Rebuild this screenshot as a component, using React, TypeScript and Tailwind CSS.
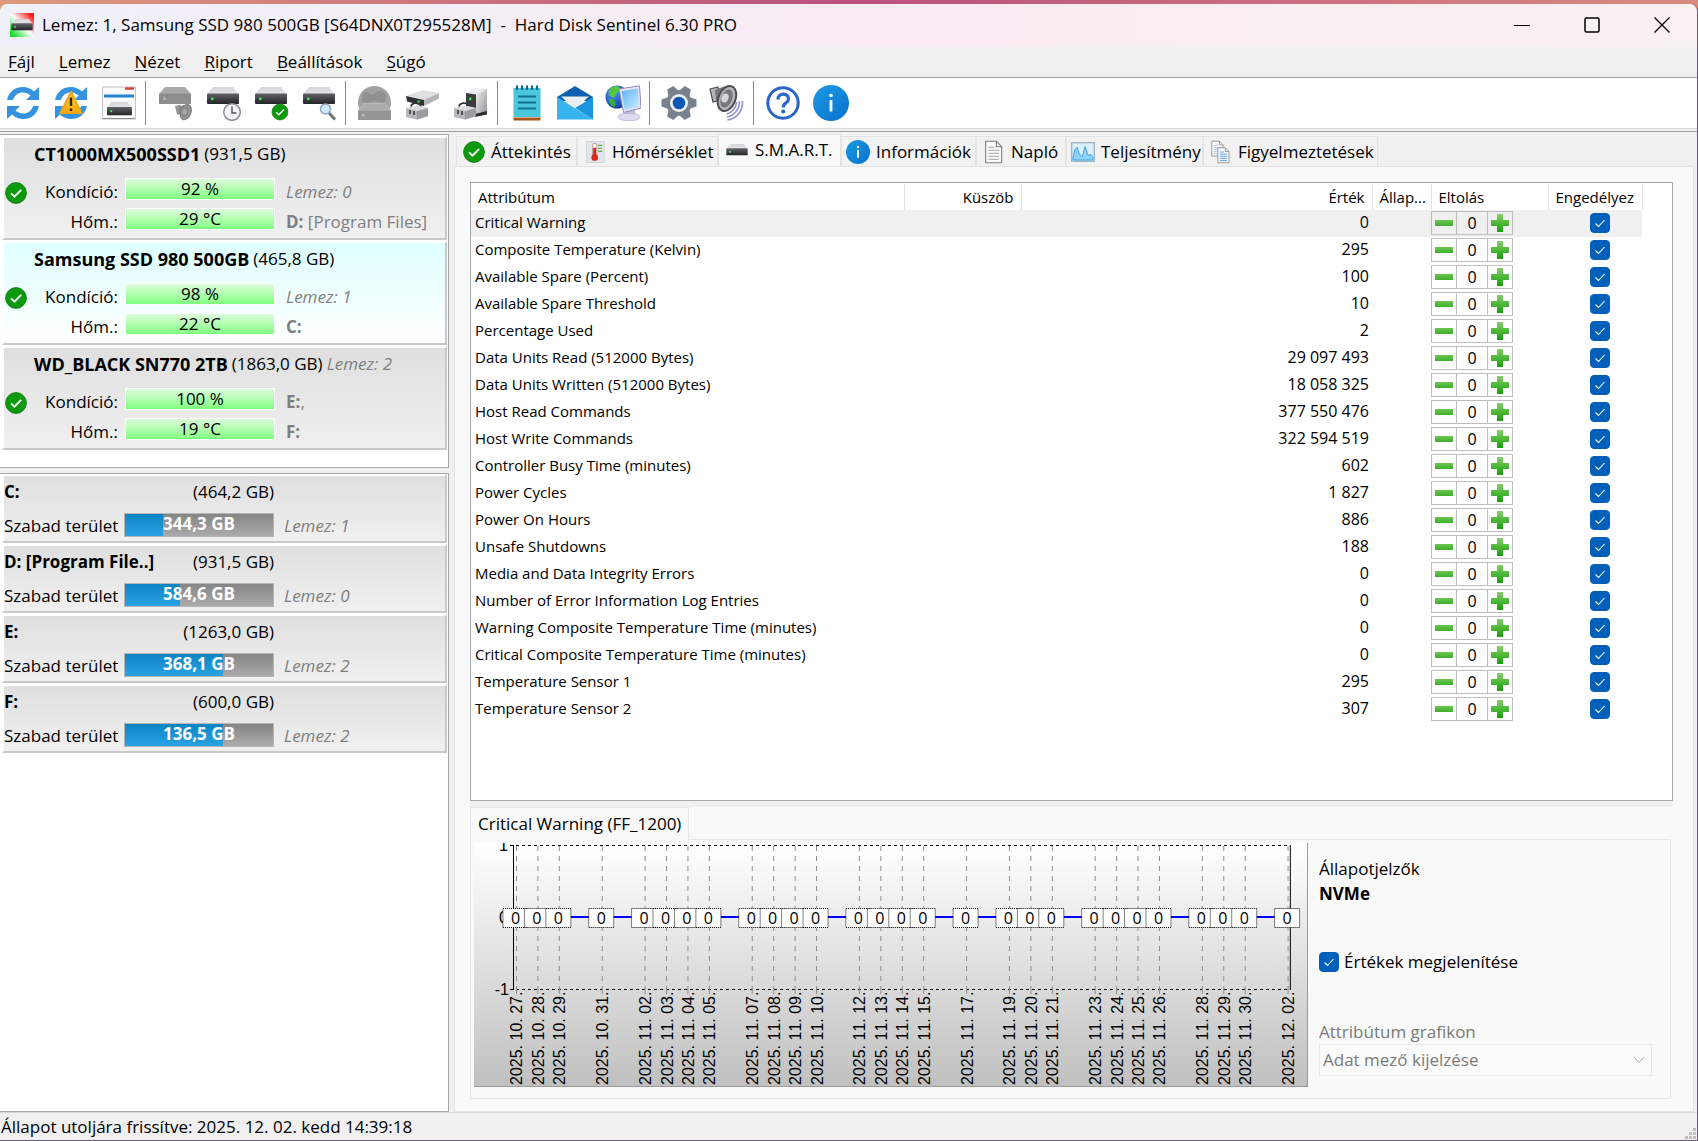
import { useId, useState } from 'react';
import type { ReactNode } from 'react';

type Disk = {
  name: string;
  size: string;
  index?: string;
  health: string;
  temp: string;
  notes: ReactNode[];
};

const disks: Disk[] = [
  {
    name: 'CT1000MX500SSD1',
    size: '(931,5 GB)',
    health: '92 %',
    temp: '29 °C',
    notes: [<i>Lemez: 0</i>, <><b>D:</b> [Program Files]</>],
  },
  {
    name: 'Samsung SSD 980 500GB',
    size: '(465,8 GB)',
    health: '98 %',
    temp: '22 °C',
    notes: [<i>Lemez: 1</i>, <b>C:</b>],
  },
  {
    name: 'WD_BLACK SN770 2TB',
    size: '(1863,0 GB)',
    index: 'Lemez: 2',
    health: '100 %',
    temp: '19 °C',
    notes: [<><b>E:</b>,</>, <b>F:</b>],
  },
];

const volumes = [
  { name: 'C:', size: '(464,2 GB)', free: '344,3 GB', used: 26, disk: 'Lemez: 1' },
  { name: 'D: [Program File..]', size: '(931,5 GB)', free: '584,6 GB', used: 37, disk: 'Lemez: 0' },
  { name: 'E:', size: '(1263,0 GB)', free: '368,1 GB', used: 66, disk: 'Lemez: 2' },
  { name: 'F:', size: '(600,0 GB)', free: '136,5 GB', used: 66, disk: 'Lemez: 2' },
];

const attributes: [string, string][] = [
  ['Critical Warning', '0'],
  ['Composite Temperature (Kelvin)', '295'],
  ['Available Spare (Percent)', '100'],
  ['Available Spare Threshold', '10'],
  ['Percentage Used', '2'],
  ['Data Units Read (512000 Bytes)', '29 097 493'],
  ['Data Units Written (512000 Bytes)', '18 058 325'],
  ['Host Read Commands', '377 550 476'],
  ['Host Write Commands', '322 594 519'],
  ['Controller Busy Time (minutes)', '602'],
  ['Power Cycles', '1 827'],
  ['Power On Hours', '886'],
  ['Unsafe Shutdowns', '188'],
  ['Media and Data Integrity Errors', '0'],
  ['Number of Error Information Log Entries', '0'],
  ['Warning Composite Temperature Time (minutes)', '0'],
  ['Critical Composite Temperature Time (minutes)', '0'],
  ['Temperature Sensor 1', '295'],
  ['Temperature Sensor 2', '307'],
];

// day = days since the first sample
const samples = [
  { day: 0, date: '2025. 10. 27.' },
  { day: 1, date: '2025. 10. 28.' },
  { day: 2, date: '2025. 10. 29.' },
  { day: 4, date: '2025. 10. 31.' },
  { day: 6, date: '2025. 11. 02.' },
  { day: 7, date: '2025. 11. 03.' },
  { day: 8, date: '2025. 11. 04.' },
  { day: 9, date: '2025. 11. 05.' },
  { day: 11, date: '2025. 11. 07.' },
  { day: 12, date: '2025. 11. 08.' },
  { day: 13, date: '2025. 11. 09.' },
  { day: 14, date: '2025. 11. 10.' },
  { day: 16, date: '2025. 11. 12.' },
  { day: 17, date: '2025. 11. 13.' },
  { day: 18, date: '2025. 11. 14.' },
  { day: 19, date: '2025. 11. 15.' },
  { day: 21, date: '2025. 11. 17.' },
  { day: 23, date: '2025. 11. 19.' },
  { day: 24, date: '2025. 11. 20.' },
  { day: 25, date: '2025. 11. 21.' },
  { day: 27, date: '2025. 11. 23.' },
  { day: 28, date: '2025. 11. 24.' },
  { day: 29, date: '2025. 11. 25.' },
  { day: 30, date: '2025. 11. 26.' },
  { day: 32, date: '2025. 11. 28.' },
  { day: 33, date: '2025. 11. 29.' },
  { day: 34, date: '2025. 11. 30.' },
  { day: 36, date: '2025. 12. 02.' },
];

/* ---------- icons ---------- */

function Svg({ size = 36, children }: { size?: number; children: ReactNode }) {
  return (
    <svg width={size} height={size} viewBox="0 0 36 36" aria-hidden="true" className="shrink-0">
      {children}
    </svg>
  );
}

function IconDefs() {
  return (
    <svg width="0" height="0" className="absolute" aria-hidden="true">
      <defs>
        <linearGradient id="diskTop" x1="0" y1="0" x2="0" y2="1">
          <stop offset="0" stopColor="#d3d4d6" />
          <stop offset="1" stopColor="#e6e7e9" />
        </linearGradient>
        <linearGradient id="diskBody" x1="0" y1="0" x2="0" y2="1">
          <stop offset="0" stopColor="#626366" />
          <stop offset="1" stopColor="#232427" />
        </linearGradient>
        <linearGradient id="metal" x1="0" y1="0" x2="1" y2="1">
          <stop offset="0" stopColor="#f1f1f2" />
          <stop offset="1" stopColor="#8f9094" />
        </linearGradient>
        <linearGradient id="sky" x1="0" y1="0" x2="1" y2="1">
          <stop offset="0" stopColor="#1c9ae2" />
          <stop offset="1" stopColor="#0872cf" />
        </linearGradient>
        <linearGradient id="screen" x1="0" y1="0" x2="1" y2="1">
          <stop offset="0" stopColor="#5fb0f0" />
          <stop offset="1" stopColor="#c6efff" />
        </linearGradient>
        <linearGradient id="warn" x1="0" y1="0" x2="0" y2="1">
          <stop offset="0" stopColor="#ffd83a" />
          <stop offset="1" stopColor="#f3a50c" />
        </linearGradient>
        <linearGradient id="leaf" x1="0" y1="0" x2="0" y2="1">
          <stop offset="0" stopColor="#86cf6c" />
          <stop offset="1" stopColor="#16a008" />
        </linearGradient>
        <linearGradient id="leafBar" x1="0" y1="0" x2="0" y2="1">
          <stop offset="0" stopColor="#6cc653" />
          <stop offset="1" stopColor="#3cb02a" />
        </linearGradient>
        <linearGradient id="chartBg" x1="0" y1="0" x2="0" y2="1">
          <stop offset="0" stopColor="#ffffff" />
          <stop offset="1" stopColor="#c0c0c0" />
        </linearGradient>
        <radialGradient id="globe" cx=".35" cy=".3" r=".8">
          <stop offset="0" stopColor="#4f9cf5" />
          <stop offset="1" stopColor="#0a2f9c" />
        </radialGradient>
        <linearGradient id="appIcon" x1="1" y1="0" x2="0" y2="1">
          <stop offset="0.1" stopColor="#ff1a1a" />
          <stop offset="0.5" stopColor="#ffffff" />
          <stop offset="0.9" stopColor="#19dc28" />
        </linearGradient>
      </defs>
    </svg>
  );
}

// 32 x 17 drive seen from the front
function Drive({ at = '2 2', scale = 1, off = false }: { at?: string; scale?: number; off?: boolean }) {
  return (
    <g transform={`translate(${at}) scale(${scale})`}>
      <path d="M6 0H26L32 7H0Z" fill={off ? '#a9a9a9' : 'url(#diskTop)'} />
      <rect y="6.5" width="32" height="10.5" rx="1" fill={off ? '#8d8d8d' : 'url(#diskBody)'} />
      <rect x="4" y="10.5" width="2.6" height="2.6" fill={off ? '#b9b9b9' : '#2cf03c'} />
    </g>
  );
}

function CheckBadge() {
  return (
    <>
      <circle cx="18" cy="18" r="17" fill="#0b9a0b" stroke="#117a14" strokeWidth="1.5" />
      <path d="M10 18.5L15.5 24L26.5 13" fill="none" stroke="#fff" strokeWidth="3" />
    </>
  );
}

function InfoDisc() {
  return (
    <>
      <circle cx="18" cy="18" r="18" fill="url(#sky)" />
      <circle cx="18" cy="10.5" r="1.8" fill="#fff" />
      <path d="M18 15V26.5" stroke="#fff" strokeWidth="2.8" />
    </>
  );
}

const ARROW = 'M2 15C4 6 11 1.500 19 2C23 2.300 26.500 4 29 6.500L34 2V15H21L25.500 10.500C20 5.500 10.500 6.500 8 15Z';

function RefreshArrows() {
  return (
    <g fill="#3593e0">
      <path d={ARROW} />
      <path d={ARROW} transform="rotate(180 18 18)" />
    </g>
  );
}

function Speaker({ off = false }: { off?: boolean }) {
  const dark = off ? '#7d7d7d' : '#4b4c50';
  const mid = off ? '#9a9a9a' : '#b4b5b9';
  const core = off ? '#8a8a8a' : '#77787d';
  return (
    <>
      <path d="M1 4L9 2L12 15L4 17Z" fill={mid} stroke={dark} strokeWidth="1.2" />
      <path d="M6 5L16 1L12 24L7 16Z" fill={core} />
      <ellipse cx="18" cy="13.500" rx="8.500" ry="13" fill={mid} stroke={dark} strokeWidth="2" transform="rotate(22 18 13.500)" />
      <ellipse cx="17.500" cy="13.500" rx="5.500" ry="9.500" fill={core} transform="rotate(22 17.500 13.500)" />
      <ellipse cx="16" cy="13" rx="3.500" ry="4.500" fill={off ? '#a8a8a8' : '#d4d5d8'} transform="rotate(22 16 13)" />
      {!off && (
        <g fill="none" stroke="#9391cf" strokeWidth="1.6">
          <path d="M27.500 17C27 23 23 27.500 17.500 29" />
          <path d="M30.500 16C30.500 24 25.500 30.500 18 32" />
          <path d="M33.500 16C34 26 28 33.500 18.500 35" />
        </g>
      )}
    </>
  );
}

function Toolbox() {
  return (
    <>
      <path d="M6 21.500C7 17 15 17 16 21.500" fill="none" stroke="#333" strokeWidth="1.8" />
      <path d="M1 23L14 21L23 23V31L12 34.500L1 32Z" fill="#b6b7ba" />
      <path d="M12 26L23 23V31L12 34.500Z" fill="#9b9ca0" />
      <path d="M1 23L14 21L23 23L12 26Z" fill="#dcdcde" />
      <path d="M5 25V29M9 26V30" stroke="#4a4a4d" strokeWidth="1.8" />
    </>
  );
}

function Gear() {
  return (
    <>
      {[30, 90, 150, 210, 270, 330].map((a) => (
        <path key={a} d="M14.500 .500H21.500L24 8H12Z" fill="#78828c" transform={`rotate(${a} 18 18)`} />
      ))}
      <circle cx="18" cy="18" r="12.800" fill="#78828c" />
      <circle cx="18" cy="18" r="9" fill="#eef1f4" />
      <circle cx="18" cy="18" r="6.300" fill="#0b57b4" />
    </>
  );
}

function Sheet({ x = 0, y = 0, line = '#b5b5b5' }: { x?: number; y?: number; line?: string }) {
  return (
    <g transform={`translate(${x} ${y})`}>
      <path d="M1 1H17L25 9V33H1Z" fill="#fcfcfc" stroke="#7b7b7b" strokeWidth="1.600" />
      <path d="M17 1V9H25" fill="none" stroke="#7b7b7b" strokeWidth="1.600" />
      <path d="M5 10H14M5 14.500H21M5 19H21M5 23.500H21M5 28H21" stroke={line} strokeWidth="1.800" />
    </g>
  );
}

const toolGroups: { label: string; icon: ReactNode }[][] = [
  [
    { label: 'Frissítés', icon: <RefreshArrows /> },
    {
      label: 'Teljes frissítés',
      icon: (
        <>
          <RefreshArrows />
          <path d="M18 7L28.500 28H7.500Z" fill="url(#warn)" stroke="#eda814" strokeWidth="2" strokeLinejoin="round" />
          <path d="M18 12.500V21M18 23.500V26" stroke="#2d2410" strokeWidth="2.400" />
        </>
      ),
    },
    {
      label: 'Lemez ablak',
      icon: (
        <>
          <rect x="1.500" y="2" width="33" height="32" fill="#fafafa" stroke="#c4c4c4" />
          <path d="M24 3.500H33" stroke="#d6433a" strokeWidth="2.500" />
          <path d="M3 11H33" stroke="#2383d2" strokeWidth="3" />
          <Drive at="6 17" scale={0.78} />
          <path d="M2 33.500H34" stroke="#8b8b8b" />
        </>
      ),
    },
  ],
  [
    {
      label: 'Akusztikus beállítás',
      icon: (
        <>
          <Drive off />
          <g transform="translate(18 19) scale(.6)"><Speaker off /></g>
        </>
      ),
    },
    {
      label: 'Rövid teszt',
      icon: (
        <>
          <Drive />
          <circle cx="27" cy="27" r="8.300" fill="#f2f3f4" stroke="#8c8e91" strokeWidth="1.500" />
          <path d="M27 21.500V28H31.500" fill="none" stroke="#55575a" strokeWidth="1.500" />
        </>
      ),
    },
    {
      label: 'Hosszú teszt',
      icon: (
        <>
          <Drive />
          <g transform="translate(18.500 18.500) scale(.47)"><CheckBadge /></g>
        </>
      ),
    },
    {
      label: 'Felületteszt',
      icon: (
        <>
          <Drive />
          <path d="M28 28L34 34.500" stroke="#6f7175" strokeWidth="3" />
          <circle cx="24.500" cy="24" r="5" fill="#cfe9ff" stroke="#8fa6c4" strokeWidth="1.500" />
        </>
      ),
    },
  ],
  [
    {
      label: 'Hálózati lemez',
      icon: (
        <>
          <circle cx="17.500" cy="17.500" r="16.500" fill="#a2a2a2" />
          <path d="M6 8C12 4 12 12 17 9C20 6 24 4 28 8C32 14 28 19 22 17C16 14 10 20 5 17Z" fill="#919191" />
          <path d="M7 18.500H28L34 25.500H1Z" fill="#adadad" stroke="#bdbdbd" strokeWidth=".800" />
          <rect x="1" y="25.500" width="33" height="9.500" fill="#959595" />
          <rect x="5" y="29" width="2.500" height="2.500" fill="#bdbdbd" />
        </>
      ),
    },
    {
      label: 'Javítás',
      icon: (
        <>
          <path d="M1 11L18 5L34 8L19 15Z" fill="#e0e0e2" />
          <path d="M1 11L19 15V21L2 16.500Z" fill="#303135" />
          <path d="M19 15L34 8V13.500L19 21Z" fill="#b4b5b8" />
          <rect x="12.500" y="15.500" width="2.200" height="2.200" fill="#2cf03c" />
          <Toolbox />
        </>
      ),
    },
    {
      label: 'Külső egység',
      icon: (
        <>
          <path d="M13 8L21 3L34 4L23 9.500Z" fill="#ececee" />
          <path d="M23 9.500L34 4V27L23 31Z" fill="url(#metal)" />
          <path d="M22 29L34 26V29.500L22 32Z" fill="#2c2d30" />
          <path d="M13 8L23 9.500V24H13Z" fill="#3a3b3f" />
          <rect x="16" y="12.500" width="2.400" height="2.600" fill="#2cf03c" />
          <Toolbox />
        </>
      ),
    },
  ],
  [
    {
      label: 'Jelentés',
      icon: (
        <>
          <rect x="4.500" y="3" width="27" height="29" fill="#4cc6dd" />
          <rect x="4.500" y="32.500" width="27" height="3" fill="#a85414" />
          <path d="M8 .500V5M13 .500V5M18 .500V5M23 .500V5M28 .500V5" stroke="#0d6b8a" strokeWidth="2.200" />
          <path d="M9 11.500H27M9 17.500H27M9 23.500H27" stroke="#14708f" strokeWidth="2" />
        </>
      ),
    },
    {
      label: 'Jelentés küldése',
      icon: (
        <>
          <path d="M0 12L18 1L36 12V16H0Z" fill="#0f5fb0" />
          <path d="M4 11.500H32L18 24Z" fill="#eceff2" />
          <path d="M0 12L36 34.500H0Z" fill="#37b4ee" />
          <path d="M36 12L18 23L36 34.500Z" fill="#1c93dd" />
        </>
      ),
    },
    {
      label: 'Hálózat',
      icon: (
        <>
          <circle cx="12" cy="12" r="11.500" fill="url(#globe)" />
          <path d="M4 5C7 0 15 0 15 4C15 8 10 8 10 12C7 13 2 11 4 5Z" fill="#55c544" />
          <path d="M4 14C8 13 12 16 10 22C6 21 3 18 4 14Z" fill="#3aae2e" />
          <path d="M21 24H30L31 31H20Z" fill="#c3c0dc" />
          <ellipse cx="24" cy="32" rx="11" ry="3.800" fill="#dddbee" stroke="#b3b0d0" strokeWidth=".800" />
          <path d="M14 4L34.500 .800L36 23L18.500 27.500Z" fill="#e3e2f2" stroke="#8f8cb8" />
          <path d="M16.500 6.200L32.800 3.500L33.800 21.300L19.800 24.500Z" fill="url(#screen)" />
        </>
      ),
    },
  ],
  [
    { label: 'Beállítások', icon: <Gear /> },
    { label: 'Hangok', icon: <Speaker /> },
  ],
  [
    {
      label: 'Súgó',
      icon: (
        <>
          <circle cx="18" cy="18" r="15.200" fill="#fff" stroke="#2b66c8" strokeWidth="3" />
          <path d="M13 14.500C13 7.500 23.500 7.500 23.500 14C23.500 18 18.200 17.500 18.200 22.500" fill="none" stroke="#2b66c8" strokeWidth="3.200" />
          <circle cx="18.200" cy="26.500" r="2.100" fill="#2b66c8" />
        </>
      ),
    },
    { label: 'Névjegy', icon: <InfoDisc /> },
  ],
];

const menu = ['Fájl', 'Lemez', 'Nézet', 'Riport', 'Beállítások', 'Súgó'];

const tabs = [
  { label: 'Áttekintés', width: 'w-[121px] pl-[6px]', icon: <Svg size={22}><CheckBadge /></Svg> },
  {
    label: 'Hőmérséklet',
    width: 'w-[141px] pl-[6px]',
    icon: (
      <Svg size={22}>
        <rect x="4" y="1" width="29" height="34" fill="#dfe5ea" stroke="#c3cad0" />
        <path d="M23 7H30M23 12H29M23 17H30" stroke="#63b84c" strokeWidth="2" />
        <rect x="14" y="4" width="7" height="22" rx="3" fill="#fff" stroke="#a66" />
        <rect x="15" y="11" width="5" height="16" fill="#d6281e" />
        <circle cx="17.500" cy="27" r="5.500" fill="#d6281e" />
      </Svg>
    ),
  },
  { label: 'S.M.A.R.T.', width: 'w-[123px] pl-[6px]', icon: <Svg size={24}><Drive at="2 9" /></Svg> },
  { label: 'Információk', width: 'w-[135px] pl-1', icon: <Svg size={24}><InfoDisc /></Svg> },
  { label: 'Napló', width: 'w-[90px] pl-1', icon: <Svg size={24}><Sheet x={6} y={1} /></Svg> },
  {
    label: 'Teljesítmény',
    width: 'w-[137px] pl-1',
    icon: (
      <Svg size={24}>
        <rect x="1" y="4" width="34" height="28" fill="#dceffa" stroke="#9fb2c0" strokeWidth="2" />
        <path d="M3 27L6 14L9 11L13 22L17 25L21 10L26 24L29 21L33 26V30H3Z" fill="#8fd3fb" stroke="#3fa6e6" strokeWidth="1.500" />
      </Svg>
    ),
  },
  {
    label: 'Figyelmeztetések',
    width: 'w-[175px] pl-1',
    icon: (
      <Svg size={24}>
        <g transform="translate(5 1) scale(.7)"><Sheet line="#9cc3ef" /></g>
        <g transform="translate(14 11) scale(.7)"><Sheet line="#3f8ff0" /></g>
      </Svg>
    ),
  },
];

/* ---------- controls ---------- */

function CheckBox({ id, label, checked, onChange }: { id?: string; label?: string; checked?: boolean; onChange?: (on: boolean) => void }) {
  const [own, setOwn] = useState(true);
  return (
    <span className="relative inline-block size-5 align-top">
      <input
        id={id}
        type="checkbox"
        checked={checked ?? own}
        onChange={(e) => (onChange ?? setOwn)(e.target.checked)}
        aria-label={label}
        className="peer block size-5 appearance-none rounded border border-[#8a8a8a] bg-white checked:border-[#005fb8] checked:bg-[#005fb8]"
      />
      <svg viewBox="0 0 20 20" className="pointer-events-none absolute inset-0 hidden peer-checked:block" aria-hidden="true">
        <path d="M5.500 10.500L8.500 13.500L14.500 7" fill="none" stroke="#fff" strokeWidth="1.100" />
      </svg>
    </span>
  );
}

function OffsetControl({ name }: { name: string }) {
  const [value, setValue] = useState(0);
  return (
    <div className="flex h-6 w-[82px] border border-[#bdbdbd]">
      <button
        type="button"
        aria-label={`${name} −`}
        onClick={() => setValue(value - 1)}
        className="flex w-6 items-center justify-center"
      >
        <svg width="18" height="18" viewBox="0 0 18 18" aria-hidden="true">
          <rect y="6" width="18" height="6" fill="url(#leafBar)" />
        </svg>
      </button>
      <input
        aria-label={name}
        value={value}
        readOnly
        className="w-0 flex-1 border-x border-[#bdbdbd] bg-transparent text-center text-base leading-5 outline-none"
      />
      <button
        type="button"
        aria-label={`${name} +`}
        onClick={() => setValue(value + 1)}
        className="flex w-6 items-center justify-center"
      >
        <svg width="18" height="18" viewBox="0 0 18 18" aria-hidden="true">
          <path d="M6 0H12V6H18V12H12V18H6V12H0V6H6Z" fill="url(#leaf)" />
        </svg>
      </button>
    </div>
  );
}

/* ---------- panels ---------- */

function TitleBar() {
  return (
    <header className="flex h-[43px] shrink-0 items-center rounded-t-lg bg-gradient-to-r from-[#f0f0fa] via-[#f9ecf3] to-[#f9f0f0] pb-[2px] pl-[10px]">
      <svg width="24" height="24" viewBox="0 0 36 36" aria-hidden="true">
        <rect width="36" height="36" fill="url(#appIcon)" />
        <Drive at="2 9" />
      </svg>
      <h1 className="ml-2 flex-1 text-[17px] whitespace-pre">
        Lemez: 1, Samsung SSD 980 500GB [S64DNX0T295528M]  -  Hard Disk Sentinel 6.30 PRO
      </h1>
      <div className="flex h-full">
        <button type="button" aria-label="Kis méret" className="flex w-[70px] items-center justify-center">
          <svg width="16" height="16" viewBox="0 0 16 16" aria-hidden="true">
            <path d="M0 8.500H16" stroke="#000" />
          </svg>
        </button>
        <button type="button" aria-label="Teljes méret" className="flex w-[70px] items-center justify-center">
          <svg width="16" height="16" viewBox="0 0 16 16" aria-hidden="true">
            <rect x="1" y="1" width="14" height="14" rx="1.500" fill="none" stroke="#000" strokeWidth="1.500" />
          </svg>
        </button>
        <button type="button" aria-label="Bezárás" className="flex w-[70px] items-center justify-center">
          <svg width="16" height="16" viewBox="0 0 16 16" aria-hidden="true">
            <path d="M.500 .500L15.500 15.500M15.500 .500L.500 15.500" stroke="#000" strokeWidth="1.300" />
          </svg>
        </button>
      </div>
    </header>
  );
}

function Toolbar() {
  return (
    <div role="toolbar" className="flex h-[52px] shrink-0 items-center border-y border-t-[#a0a0a0] border-b-[#d8d8d8] bg-white pl-[5px]">
      {toolGroups.map((group, i) => (
        <div key={i} className="flex items-center">
          {i > 0 && <div className="mr-[11px] ml-2 h-11 w-px bg-[#8c8c8c]" />}
          <div className="flex gap-3">
            {group.map((tool) => (
              <button key={tool.label} type="button" aria-label={tool.label} className="size-9">
                <Svg>{tool.icon}</Svg>
              </button>
            ))}
          </div>
        </div>
      ))}
    </div>
  );
}

function Meter({ children }: { children: ReactNode }) {
  return (
    <div className="h-[22px] w-[150px] border border-white bg-gradient-to-b from-[#dcfcdc] to-[#7dff7d] text-center leading-5">
      {children}
    </div>
  );
}

function DiskCard({ disk, active, onSelect }: { disk: Disk; active: boolean; onSelect: () => void }) {
  return (
    <article
      onClick={onSelect}
      className={
        'mb-px h-[104px] border-2 border-t-white border-r-[#c8c8c8] border-b-[#c8c8c8] border-l-white bg-gradient-to-b ' +
        (active ? 'from-[#dfffff] to-white' : 'from-[#dfdfdf] to-[#f0f0f0]')
      }
    >
      <h2 className="ml-[30px] flex h-8 items-center gap-1 font-normal whitespace-nowrap">
        <b className="text-lg leading-6">{disk.name}</b>
        <span>{disk.size}</span>
        {disk.index && <i className="text-[#808080]">{disk.index}</i>}
      </h2>
      <div className="flex">
        <div className="mt-3 ml-px w-6">
          <Svg size={22}><CheckBadge /></Svg>
        </div>
        <div className="mt-2 grid grid-cols-[89px_150px_1fr] gap-x-[7px] gap-y-1">
          <span className="pt-[2px] text-right leading-6">Kondíció:</span>
          <Meter>{disk.health}</Meter>
          <span className="pt-[2px] pl-1 leading-6 whitespace-nowrap text-[#808080]">{disk.notes[0]}</span>
          <span className="pt-[2px] text-right leading-6">Hőm.:</span>
          <Meter>{disk.temp}</Meter>
          <span className="pt-[2px] pl-1 leading-6 whitespace-nowrap text-[#808080]">{disk.notes[1]}</span>
        </div>
      </div>
    </article>
  );
}

function VolumeCard({ volume }: { volume: (typeof volumes)[number] }) {
  return (
    <article className="mb-px h-[69px] border-2 border-t-white border-r-[#c8c8c8] border-b-[#c8c8c8] border-l-white bg-gradient-to-b from-[#dfdfdf] to-[#f0f0f0]">
      <div className="flex h-8 w-[270px] items-center justify-between">
        <b>{volume.name}</b>
        <span>{volume.size}</span>
      </div>
      <div className="mt-[5px] flex">
        <span className="w-[120px] pt-px">Szabad terület</span>
        <div className="relative h-6 w-[150px] border border-[#b5b5b5] bg-gradient-to-b from-[#858585] to-[#ababab] text-center leading-5 font-bold text-white">
          <div className="absolute inset-y-0 left-0 bg-gradient-to-b from-[#0a84c4] to-[#29a3e3]" style={{ width: `${volume.used}%` }} />
          <span className="relative">{volume.free}</span>
        </div>
        <i className="ml-[10px] pt-px text-[#808080]">{volume.disk}</i>
      </div>
    </article>
  );
}

function AttributeTable() {
  const [selected, setSelected] = useState(0);
  return (
    <div className="min-h-0 flex-1 border border-[#a5a8ad] bg-white pt-px">
      <table className="w-full table-fixed border-collapse text-[15px] leading-[22px]">
        <colgroup>
          <col className="w-[433px]" />
          <col className="w-[117px]" />
          <col />
          <col className="w-[59px]" />
          <col className="w-[117px]" />
          <col className="w-[94px]" />
          <col className="w-[30px]" />
        </colgroup>
        <thead>
          <tr className="h-[26px] *:border-r *:border-[#e2e2e2] *:px-[7px] *:font-normal">
            <th className="text-left">Attribútum</th>
            <th className="text-right">Küszöb</th>
            <th className="text-right">Érték</th>
            <th className="text-left">Állap...</th>
            <th className="text-left">Eltolás</th>
            <th className="text-left">Engedélyez</th>
            <td className="border-r-0!" />
          </tr>
        </thead>
        <tbody>
          {attributes.map(([name, value], i) => (
            <tr
              key={name}
              onClick={() => setSelected(i)}
              className={'h-[27px] *:p-0 *:align-top ' + (i === selected ? '*:not-last:bg-[#f0f0f0]' : '')}
            >
              <td><div className="pl-1 leading-6">{name}</div></td>
              <td />
              <td><div className="pr-[3px] text-right text-base leading-6">{value}</div></td>
              <td />
              <td className="pt-px!"><OffsetControl name={name} /></td>
              <td className="pt-[3px]! pl-[42px]!"><CheckBox label={name} /></td>
              <td />
            </tr>
          ))}
        </tbody>
      </table>
    </div>
  );
}

// Sample positions are percentages of the plot, so the chart follows the panel's width.
function HistoryChart({ showValues }: { showValues: boolean }) {
  const x = (day: number) => `${5.1 + day * 2.573}%`;
  return (
    <svg className="h-[244px] w-full border-r border-b border-[#9a9a9a] font-['Liberation_Sans'] text-base [font-kerning:none]" role="img" aria-label="Critical Warning">
      <rect width="100%" height="100%" fill="url(#chartBg)" />
      <g textAnchor="end">
        <text x="34" y="8">1</text>
        <text x="34" y="80">0</text>
        <text x="35" y="152">-1</text>
      </g>
      <path d="M39.500 2V147" stroke="#000" />
      <line x1="98%" x2="98%" y1="2" y2="147" stroke="#000" />
      <line x1="36" x2="98%" y1="2.500" y2="2.500" stroke="#000" strokeDasharray="3 3" />
      <line x1="36" x2="98%" y1="146.500" y2="146.500" stroke="#000" strokeDasharray="3 3" />
      {samples.map((s) => (
        <svg key={s.date} x={x(s.day)} className="overflow-visible">
          <path d="M0 3V147" stroke="#8e8e8e" strokeDasharray="5 5" />
          <path d="M0 147V151" stroke="#8e8e8e" />
          <text transform="translate(6 242) rotate(-90)">{s.date}</text>
        </svg>
      ))}
      <line x1={x(0)} x2={x(36)} y1="74" y2="74" stroke="#0000ff" strokeWidth="2" />
      {showValues &&
        samples.map((s) => (
          <svg key={s.date} x={x(s.day)} className="overflow-visible">
            <rect x="-13.500" y="65.500" width="25" height="19" fill="#fff" stroke="#000" strokeDasharray="1 1" />
            <text x="-1" y="81" textAnchor="middle" className="font-['Open_Sans']">0</text>
          </svg>
        ))}
    </svg>
  );
}

function HistoryPanel() {
  const showId = useId();
  const chartId = useId();
  const [showValues, setShowValues] = useState(true);
  return (
    <section className="mr-[2px] shrink-0">
      <div className="flex">
        <h3 className="h-[33px] border border-b-0 border-[#e5e5e5] bg-[#f9f9f9] px-[7px] leading-8">Critical Warning (FF_1200)</h3>
        <div className="flex-1 border-b border-[#e5e5e5]" />
      </div>
      <div className="flex h-[259px] border border-t-0 border-[#e5e5e5] pt-[3px] pl-[3px]">
        <div className="min-w-0 flex-1">
          <HistoryChart showValues={showValues} />
        </div>
        <div className="w-[362px] pt-[13px] pr-[18px] pl-[11px]">
          <p className="leading-[25px]">Állapotjelzők</p>
          <p className="leading-[25px] font-bold">NVMe</p>
          <div className="mt-[46px] flex items-center gap-[5px] leading-5">
            <CheckBox id={showId} checked={showValues} onChange={setShowValues} />
            <label htmlFor={showId}>Értékek megjelenítése</label>
          </div>
          <label htmlFor={chartId} className="mt-12 block leading-6 text-[#7a7a7a]">Attribútum grafikon</label>
          <div className="relative">
            <select
              id={chartId}
              disabled
              className="h-8 w-full appearance-none border border-[#e8e8e8] bg-[#fbfbfb] pl-[3px] text-[#7a7a7a]"
            >
              <option>Adat mező kijelzése</option>
            </select>
            <svg width="12" height="8" viewBox="0 0 12 8" className="absolute top-3 right-[7px]" aria-hidden="true">
              <path d="M1 1L6 6.500L11 1" fill="none" stroke="#a8a8a8" />
            </svg>
          </div>
        </div>
      </div>
    </section>
  );
}

export default function App() {
  const [activeDisk, setActiveDisk] = useState(1);
  const [activeTab, setActiveTab] = useState(2);

  return (
    <div className="h-screen bg-gradient-to-r from-[#dd9a7c] via-[#b8507c] to-[#d98a80] pt-1 font-['Open_Sans',sans-serif] text-[17px] leading-6 text-black">
      <IconDefs />
      <div className="flex h-full flex-col rounded-t-lg border-r border-b border-[#6b5b7b] bg-[#f0f0f0]">
        <TitleBar />
        <nav className="flex h-[30px] shrink-0 items-center gap-6 pl-2">
          {menu.map((item) => (
            <button key={item} type="button">
              <u className="underline-offset-2">{item[0]}</u>
              {item.slice(1)}
            </button>
          ))}
        </nav>
        <Toolbar />
        <div className="mt-[2px] flex min-h-0 flex-1 border-t border-[#a0a0a0]">
          <aside className="mt-[2px] flex w-[449px] shrink-0 flex-col gap-[5px]">
            <div className="h-[334px] border border-l-0 border-[#a5a8ad] bg-white pt-px pr-px pl-[2px]">
              {disks.map((disk, i) => (
                <DiskCard key={disk.name} disk={disk} active={i === activeDisk} onSelect={() => setActiveDisk(i)} />
              ))}
            </div>
            <div className="flex-1 border border-l-0 border-[#a5a8ad] bg-white pr-px pl-[2px]">
              {volumes.map((volume) => (
                <VolumeCard key={volume.name} volume={volume} />
              ))}
            </div>
          </aside>
          <main className="ml-[5px] flex min-w-0 flex-1 flex-col pt-[2px] pr-[3px]">
            <div role="tablist" className="flex h-8 items-end pl-[2px]">
              {tabs.map((tab, i) => (
                <button
                  key={tab.label}
                  type="button"
                  role="tab"
                  aria-selected={i === activeTab}
                  onClick={() => setActiveTab(i)}
                  className={
                    'flex items-center gap-[6px] border border-b-0 border-[#e3e3e3] whitespace-nowrap ' +
                    tab.width +
                    (i === activeTab ? ' h-8 bg-[#f9f9f9] pb-[2px]' : ' h-[30px] bg-[#f2f2f2]')
                  }
                >
                  {tab.icon}
                  {tab.label}
                </button>
              ))}
            </div>
            <div className="flex min-h-0 flex-1 flex-col border border-[#e3e3e3] bg-[#f9f9f9] pt-[15px] pr-5 pb-3 pl-[15px]">
              <AttributeTable />
              <div className="h-[6px] shrink-0 bg-[#f0f0f0]" />
              <HistoryPanel />
            </div>
          </main>
        </div>
        <footer className="flex h-7 shrink-0 items-center justify-between border-t border-[#d7d7d7] pl-px">
          <span>Állapot utoljára frissítve: 2025. 12. 02. kedd 14:39:18</span>
          <svg width="12" height="12" viewBox="0 0 12 12" className="self-end" aria-hidden="true">
            <path d="M8 0h3v3H8zM4 4h3v3H4zM8 4h3v3H8zM0 8h3v3H0zM4 8h3v3H4zM8 8h3v3H8z" fill="#bfbfbf" />
          </svg>
        </footer>
      </div>
    </div>
  );
}
